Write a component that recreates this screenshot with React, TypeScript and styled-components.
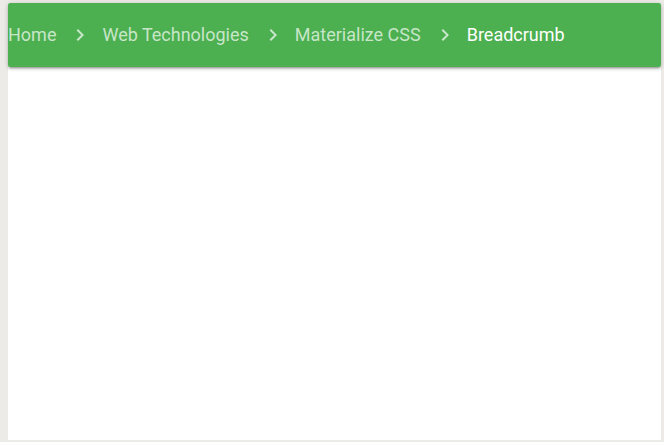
import React from 'react';
import styled, { createGlobalStyle } from 'styled-components';

const GlobalStyle = createGlobalStyle`
    html, body {
        margin: 0;
        padding: 0;
        background: #ecebe7;
    }
    body {
        font-family: Roboto, 'Liberation Sans', sans-serif;
    }
`;

const Page = styled.div`
    height: 442px;
    box-sizing: border-box;
    padding: 3px 3px 2px 8px;
    display: flex;
`;

const Sheet = styled.div`
    flex: 1;
    background: #ffffff;
    display: flex;
    flex-direction: column;
`;

const Nav = styled.nav`
    height: 64px;
    background: #4caf50;
    border-radius: 2px;
    box-shadow: 0 2px 2px 0 rgba(0, 0, 0, 0.14), 0 3px 1px -2px rgba(0, 0, 0, 0.12),
        0 1px 5px 0 rgba(0, 0, 0, 0.2);
    display: flex;
    align-items: center;
`;

const Crumb = styled.a<{ $active?: boolean }>`
    font-size: 18px;
    line-height: 64px;
    color: ${(p) => (p.$active ? '#ffffff' : 'rgba(255, 255, 255, 0.7)')};
    text-decoration: none;
    cursor: pointer;
`;

const Separator = styled.svg`
    width: 24px;
    height: 24px;
    margin: 0 10px 0 12px;
    fill: rgba(255, 255, 255, 0.7);
    flex-shrink: 0;
`;

const Chevron = () => (
    <Separator viewBox='0 0 24 24' aria-hidden='true'>
        <path d='M10 6L8.59 7.41 13.17 12l-4.58 4.59L10 18l6-6z' />
    </Separator>
);

const crumbs = ['Home', 'Web Technologies', 'Materialize CSS', 'Breadcrumb'];

const App: React.FC = () => {
    return (
        <>
            <GlobalStyle />
            <Page>
                <Sheet>
                    <Nav>
                        {crumbs.map((label, i) => (
                            <React.Fragment key={label}>
                                {i > 0 && <Chevron />}
                                <Crumb $active={i === crumbs.length - 1}>{label}</Crumb>
                            </React.Fragment>
                        ))}
                    </Nav>
                </Sheet>
            </Page>
        </>
    );
};

export default App;
